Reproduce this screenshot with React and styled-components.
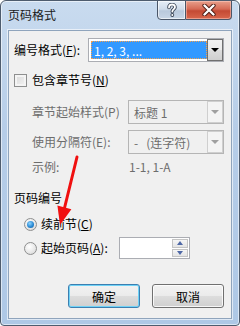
import React from "react";
import styled, { createGlobalStyle, css } from "styled-components";

const Global = createGlobalStyle`
  html, body { margin: 0; padding: 0; background: #ffffff; }
  body { font-family: "Noto Sans CJK SC", "Liberation Sans", sans-serif; font-size: 12px; }
  * { box-sizing: border-box; }
`;

const Window = styled.div`
  position: relative;
  width: 240px;
  height: 326px;
  border: 1px solid #4e5c6e;
  border-radius: 6px 6px 4px 4px;
  background: linear-gradient(to bottom, #c9dbef 0%, #b6cde8 40%, #aec8e6 100%);
  display: flex;
  flex-direction: column;
  overflow: hidden;
  box-shadow: inset 0 0 0 1px rgba(255,255,255,0.55);
`;

const TitleBar = styled.div`
  height: 29px;
  display: flex;
  align-items: flex-start;
  justify-content: space-between;
  padding-right: 7px;
`;

const Title = styled.div`
  padding: 6px 0 0 7px;
  font-size: 12px;
  line-height: 16px;
  color: #1a1a1a;
`;

const CaptionButtons = styled.div`
  display: flex;
  margin-top: -1px;
`;

const CaptionButton = styled.div`
  height: 20px;
  display: flex;
  align-items: center;
  justify-content: center;
  border: 1px solid #4a5668;
  font-family: "DejaVu Sans", sans-serif;
  font-weight: bold;
  ${(p) =>
    p.$close
      ? css`
          width: 46px;
          border-radius: 0 0 4px 0;
          border-left: none;
          background: linear-gradient(to bottom, #e8a08c 0%, #d56a55 45%, #c44a34 55%, #d8664c 100%);
          box-shadow: inset 0 0 0 1px rgba(255,210,200,0.5);
        `
      : css`
          width: 29px;
          border-radius: 0 0 0 4px;
          background: linear-gradient(to bottom, #e6eef7 0%, #d0dcea 45%, #b9c9dc 55%, #c8d6e6 100%);
          box-shadow: inset 0 0 0 1px rgba(255,255,255,0.6);
        `}
`;

const Client = styled.div`
  flex: 1;
  margin: 0 7px 6px 7px;
  background: #f0f0f0;
  border: 1px solid #8fa4bc;
  box-shadow: 0 0 0 1px rgba(255,255,255,0.6);
  display: flex;
  flex-direction: column;
  padding: 0 7px 0 5px;
`;

const Row = styled.div`
  display: flex;
  align-items: center;
  height: ${(p) => p.$h || 16}px;
  margin-top: ${(p) => p.$mt || 0}px;
  padding-left: ${(p) => p.$indent || 0}px;
`;

const Label = styled.span`
  color: ${(p) => (p.$disabled ? "#6d6d6d" : "#000")};
  white-space: nowrap;
  line-height: 16px;
  width: ${(p) => (p.$w ? p.$w + "px" : "auto")};
  flex: none;
`;

const U = styled.span`
  text-decoration: underline;
  text-underline-offset: 1px;
`;

const Combo = styled.div`
  flex: 1;
  height: 24px;
  display: flex;
  border: 1px solid ${(p) => (p.$disabled ? "#b5b5b5" : "#abadb3")};
  background: ${(p) => (p.$disabled ? "#f0f0f0" : "#ffffff")};
  padding: 2px;
`;

const ComboText = styled.div`
  flex: 1;
  display: flex;
  align-items: center;
  padding-left: 3px;
  color: ${(p) => (p.$disabled ? "#6d6d6d" : "#ffffff")};
  ${(p) =>
    p.$selected &&
    css`
      background: #3399ff;
      outline: 1px dotted #f7a04a;
      outline-offset: -1px;
    `}
`;

const DropButton = styled.div`
  width: 16px;
  margin: -2px -2px -2px 0;
  display: flex;
  align-items: center;
  justify-content: center;
  border: 1px solid ${(p) => (p.$disabled ? "#cfcfcf" : "#707070")};
  background: ${(p) =>
    p.$disabled
      ? "#f4f4f4"
      : "linear-gradient(to bottom, #f2f2f2 0%, #ebebeb 50%, #dddddd 51%, #cfcfcf 100%)"};
`;

const Triangle = styled.span`
  width: 0;
  height: 0;
  border-left: 4px solid transparent;
  border-right: 4px solid transparent;
  border-top: 4px solid ${(p) => (p.$disabled ? "#a0a0a0" : "#000")};
`;

const CheckBox = styled.span`
  width: 13px;
  height: 13px;
  border: 1px solid #8e8f8f;
  background: linear-gradient(135deg, #d9d9d9 0%, #f4f4f4 100%);
  box-shadow: inset 0 0 0 2px #f4f4f4;
  margin-right: 5px;
  flex: none;
`;

const Radio = styled.span`
  width: 13px;
  height: 13px;
  border-radius: 50%;
  border: 1px solid #8e8f8f;
  background: radial-gradient(circle at 40% 35%, #ffffff 0%, #e6e6e6 60%, #cfcfcf 100%);
  margin-right: 4px;
  flex: none;
  display: flex;
  align-items: center;
  justify-content: center;
  ${(p) =>
    p.$checked &&
    css`
      &::after {
        content: "";
        width: 7px;
        height: 7px;
        border-radius: 50%;
        background: radial-gradient(circle at 40% 35%, #8fd4ff 0%, #2a8ad4 55%, #145c9c 100%);
      }
    `}
`;

const SpinBox = styled.div`
  width: 71px;
  height: 22px;
  margin-left: 11px;
  border: 1px solid #abadb3;
  background: #ffffff;
  display: flex;
  justify-content: flex-end;
  padding: 1px;
`;

const SpinButtons = styled.div`
  width: 16px;
  display: flex;
  flex-direction: column;
  gap: 1px;
`;

const SpinButton = styled.div`
  flex: 1;
  display: flex;
  align-items: center;
  justify-content: center;
  border: 1px solid #c4c4c4;
  background: linear-gradient(to bottom, #f6f6f6, #e4e4e4);
`;

const SpinArrow = styled.span`
  width: 0;
  height: 0;
  border-left: 3.5px solid transparent;
  border-right: 3.5px solid transparent;
  ${(p) =>
    p.$up
      ? css`border-bottom: 4px solid #4e68a6;`
      : css`border-top: 4px solid #4e68a6;`}
`;

const ButtonRow = styled.div`
  display: flex;
  justify-content: flex-end;
  gap: 12px;
  margin-top: 25px;
`;

const Button = styled.div`
  width: 72px;
  height: 24px;
  border-radius: 3px;
  display: flex;
  align-items: center;
  justify-content: center;
  color: #000;
  background: linear-gradient(to bottom, #f2f2f2 0%, #ebebeb 50%, #dddddd 51%, #cfcfcf 100%);
  border: 1px solid ${(p) => (p.$default ? "#3c7fb1" : "#707070")};
  box-shadow: inset 0 0 0 1px ${(p) => (p.$default ? "#6fd2f6" : "rgba(255,255,255,0.8)")};
`;

const ArrowOverlay = styled.svg`
  position: absolute;
  left: 0;
  top: 0;
  pointer-events: none;
`;

export default function App() {
  return (
    <>
      <Global />
      <Window>
        <TitleBar>
          <Title>页码格式</Title>
          <CaptionButtons>
            <CaptionButton>
              <svg width="12" height="14" viewBox="0 0 12 14">
                <path
                  d="M3 4.5 C3 2 4.5 1.5 6 1.5 C7.8 1.5 9 2.6 9 4.2 C9 6 6.3 6.3 6.3 8.5"
                  fill="none"
                  stroke="#3a4556"
                  strokeWidth="3.6"
                  strokeLinecap="round"
                />
                <path
                  d="M3 4.5 C3 2 4.5 1.5 6 1.5 C7.8 1.5 9 2.6 9 4.2 C9 6 6.3 6.3 6.3 8.5"
                  fill="none"
                  stroke="#ffffff"
                  strokeWidth="1.8"
                  strokeLinecap="round"
                />
                <circle cx="6.3" cy="12" r="1.9" fill="#3a4556" />
                <circle cx="6.3" cy="12" r="1" fill="#ffffff" />
              </svg>
            </CaptionButton>
            <CaptionButton $close>
              <svg width="14" height="12" viewBox="0 0 14 12">
                <path d="M2.5 1.5 L11.5 10.5 M11.5 1.5 L2.5 10.5" stroke="#4a1a12" strokeWidth="4.2" strokeLinecap="round" />
                <path d="M2.5 1.5 L11.5 10.5 M11.5 1.5 L2.5 10.5" stroke="#ffffff" strokeWidth="2.4" strokeLinecap="round" />
              </svg>
            </CaptionButton>
          </CaptionButtons>
        </TitleBar>

        <Client>
          <Row $h={24} $mt={7}>
            <Label $w={74}>
              编号格式(<U>F</U>):
            </Label>
            <Combo>
              <ComboText $selected>1, 2, 3, ...</ComboText>
              <DropButton>
                <Triangle />
              </DropButton>
            </Combo>
          </Row>

          <Row $mt={10}>
            <CheckBox />
            <Label>
              包含章节号(<U>N</U>)
            </Label>
          </Row>

          <Row $h={24} $mt={12} $indent={18}>
            <Label $w={96} $disabled>
              章节起始样式(P)
            </Label>
            <Combo $disabled>
              <ComboText $disabled>标题 1</ComboText>
              <DropButton $disabled>
                <Triangle $disabled />
              </DropButton>
            </Combo>
          </Row>

          <Row $h={24} $mt={6} $indent={18}>
            <Label $w={96} $disabled>
              使用分隔符(E):
            </Label>
            <Combo $disabled>
              <ComboText $disabled>-&nbsp;&nbsp;&nbsp;(连字符)</ComboText>
              <DropButton $disabled>
                <Triangle $disabled />
              </DropButton>
            </Combo>
          </Row>

          <Row $mt={5} $indent={18}>
            <Label $w={97} $disabled>
              示例:
            </Label>
            <Label $disabled>1-1, 1-A</Label>
          </Row>

          <Row $mt={15}>
            <Label>页码编号</Label>
          </Row>

          <Row $mt={10} $indent={10}>
            <Radio $checked />
            <Label>
              续前节(<U>C</U>)
            </Label>
          </Row>

          <Row $h={22} $mt={5} $indent={10}>
            <Radio />
            <Label>
              起始页码(<U>A</U>):
            </Label>
            <SpinBox>
              <SpinButtons>
                <SpinButton>
                  <SpinArrow $up />
                </SpinButton>
                <SpinButton>
                  <SpinArrow />
                </SpinButton>
              </SpinButtons>
            </SpinBox>
          </Row>

          <ButtonRow>
            <Button $default>确定</Button>
            <Button>取消</Button>
          </ButtonRow>
        </Client>

        <ArrowOverlay width="240" height="326" viewBox="0 0 240 326">
          <line x1="76" y1="156" x2="63.5" y2="207" stroke="#f01010" strokeWidth="3" strokeLinecap="round" />
          <polygon points="56.4,204.6 70.4,208.2 59,224" fill="#f01010" />
        </ArrowOverlay>
      </Window>
    </>
  );
}
